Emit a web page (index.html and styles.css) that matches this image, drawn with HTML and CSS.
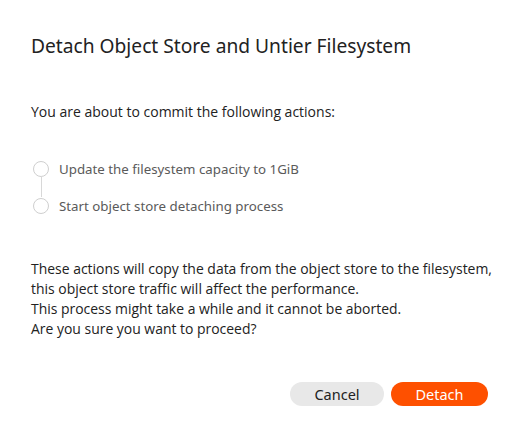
FILE: index.html
```html
<!DOCTYPE html>
<html>
<head>
<meta charset="utf-8">
<link rel="stylesheet" href="styles.css">
</head>
<body>
<div class="dialog">
  <h1 class="title">Detach Object Store and Untier Filesystem</h1>
  <p class="intro">You are about to commit the following actions:</p>
  <ul class="steps">
    <li class="step"><span class="dot"></span><span class="label">Update the filesystem capacity to 1GiB</span></li>
    <li class="step"><span class="dot"></span><span class="label">Start object store detaching process</span></li>
  </ul>
  <p class="warn">These actions will copy the data from the object store to the filesystem,<br>this object store traffic will affect the performance.<br>This process might take a while and it cannot be aborted.<br>Are you sure you want to proceed?</p>
  <div class="actions">
    <button class="btn cancel">Cancel</button>
    <button class="btn detach">Detach</button>
  </div>
</div>
</body>
</html>
```
FILE: styles.css
```css
html, body {
  margin: 0;
  padding: 0;
  background: #fff;
}
.dialog {
  width: 525px;
  height: 441px;
  box-sizing: border-box;
  padding: 33px 37px 0 31px;
  display: flex;
  flex-direction: column;
  color: #222;
}
.title {
  margin: 0;
  font-family: "Noto Sans", sans-serif;
  font-weight: 400;
  font-size: 19.2px;
  line-height: 26px;
  color: #222;
}
.intro {
  margin: 43px 0 0 0;
  font-family: "Open Sans", sans-serif;
  font-size: 14px;
  line-height: 20px;
}
.steps {
  list-style: none;
  margin: 38px 0 0 2px;
  padding: 0;
  display: flex;
  flex-direction: column;
  gap: 20px;
}
.step {
  display: flex;
  align-items: center;
  gap: 10px;
  position: relative;
  height: 17px;
}
.step:first-child::after {
  content: "";
  position: absolute;
  left: 8px;
  top: 16px;
  width: 1px;
  height: 21px;
  background: #d8d8d8;
}
.dot {
  width: 14px;
  height: 14px;
  border: 1px solid #cfcfcf;
  border-radius: 50%;
  background: #fff;
  flex: none;
}
.label {
  font-family: "Noto Sans", sans-serif;
  font-size: 13.3px;
  color: #5a5a5a;
}
.warn {
  margin: 45px 0 0 0;
  font-family: "Open Sans", sans-serif;
  font-size: 13.95px;
  line-height: 20px;
  white-space: nowrap;
}
.actions {
  margin-top: 43px;
  display: flex;
  justify-content: flex-end;
  gap: 7px;
}
.btn {
  border: none;
  border-radius: 12px;
  height: 24px;
  padding: 0;
  font-family: "Noto Sans", sans-serif;
  font-size: 14.5px;
  line-height: 24px;
  cursor: pointer;
}
.cancel {
  width: 94px;
  background: #e8e8e8;
  color: #222;
}
.detach {
  width: 97px;
  background: #fe5000;
  color: #fff;
}
```
